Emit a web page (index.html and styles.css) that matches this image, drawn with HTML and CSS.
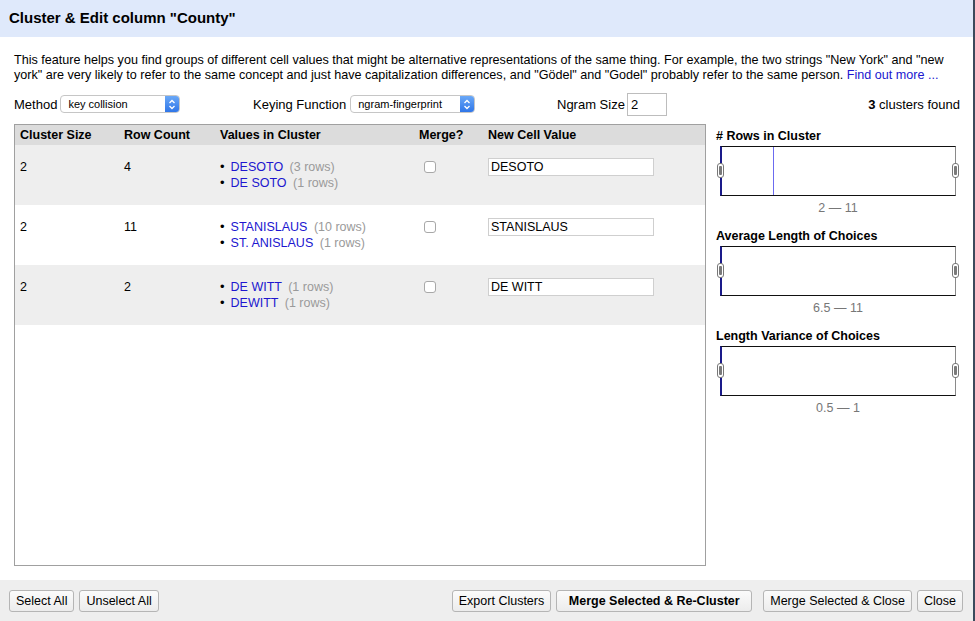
FILE: index.html
```html
<!DOCTYPE html>
<html>
<head>
<meta charset="utf-8">
<link rel="stylesheet" href="styles.css">
</head>
<body>
<div class="dialog">
  <div class="header">Cluster &amp; Edit column "County"</div>
  <div class="content">
    <p class="desc">This feature helps you find groups of different cell values that might be alternative representations of the same thing. For example, the two strings "New York" and "new york" are very likely to refer to the same concept and just have capitalization differences, and "Gödel" and "Godel" probably refer to the same person. <a class="link">Find out more ...</a></p>
    <div class="controls">
      <div class="ctl ctl-method">
        <span>Method</span>
        <div class="select sel-method"><span class="sel-text">key collision</span><span class="stepper"><svg width="8" height="11" viewBox="0 0 8 11"><path d="M1.5 4 L4 1.5 L6.5 4 M1.5 7 L4 9.5 L6.5 7" fill="none" stroke="#fff" stroke-width="1.3"/></svg></span></div>
      </div>
      <div class="ctl ctl-key">
        <span>Keying Function</span>
        <div class="select sel-key"><span class="sel-text">ngram-fingerprint</span><span class="stepper"><svg width="8" height="11" viewBox="0 0 8 11"><path d="M1.5 4 L4 1.5 L6.5 4 M1.5 7 L4 9.5 L6.5 7" fill="none" stroke="#fff" stroke-width="1.3"/></svg></span></div>
      </div>
      <div class="ctl ctl-ngram">
        <span>Ngram Size</span>
        <div class="ngram-input">2</div>
      </div>
      <div class="found"><b>3</b> clusters found</div>
    </div>
    <div class="main">
      <div class="table-box">
        <div class="trow thead">
          <div class="c1">Cluster Size</div>
          <div class="c2">Row Count</div>
          <div class="c3">Values in Cluster</div>
          <div class="c4">Merge?</div>
          <div class="c5">New Cell Value</div>
        </div>
        <div class="trow odd">
          <div class="c1">2</div>
          <div class="c2">4</div>
          <div class="c3"><ul><li><a class="link">DESOTO</a> <span class="cnt">(3 rows)</span></li><li><a class="link">DE SOTO</a> <span class="cnt">(1 rows)</span></li></ul></div>
          <div class="c4"><span class="check"></span></div>
          <div class="c5"><div class="cell-input">DESOTO</div></div>
        </div>
        <div class="trow even">
          <div class="c1">2</div>
          <div class="c2">11</div>
          <div class="c3"><ul><li><a class="link">STANISLAUS</a> <span class="cnt">(10 rows)</span></li><li><a class="link">ST. ANISLAUS</a> <span class="cnt">(1 rows)</span></li></ul></div>
          <div class="c4"><span class="check"></span></div>
          <div class="c5"><div class="cell-input">STANISLAUS</div></div>
        </div>
        <div class="trow odd">
          <div class="c1">2</div>
          <div class="c2">2</div>
          <div class="c3"><ul><li><a class="link">DE WITT</a> <span class="cnt">(1 rows)</span></li><li><a class="link">DEWITT</a> <span class="cnt">(1 rows)</span></li></ul></div>
          <div class="c4"><span class="check"></span></div>
          <div class="c5"><div class="cell-input">DE WITT</div></div>
        </div>
      </div>
      <div class="facets">
        <div class="facet">
          <div class="facet-title"># Rows in Cluster</div>
          <div class="hist">
            <span class="bar" style="left: 51px"></span>
            <span class="handle hl"></span><span class="handle hr"></span>
          </div>
          <div class="range">2 — 11</div>
        </div>
        <div class="facet">
          <div class="facet-title">Average Length of Choices</div>
          <div class="hist">
            <span class="handle hl"></span><span class="handle hr"></span>
          </div>
          <div class="range">6.5 — 11</div>
        </div>
        <div class="facet">
          <div class="facet-title">Length Variance of Choices</div>
          <div class="hist">
            <span class="handle hl"></span><span class="handle hr"></span>
          </div>
          <div class="range">0.5 — 1</div>
        </div>
      </div>
    </div>
  </div>
  <div class="footer">
    <div class="btn-group">
      <button class="btn">Select All</button>
      <button class="btn">Unselect All</button>
    </div>
    <div class="btn-group">
      <button class="btn btn-export">Export Clusters</button>
      <button class="btn btn-primary">Merge Selected &amp; Re-Cluster</button>
      <button class="btn btn-close-merge">Merge Selected &amp; Close</button>
      <button class="btn">Close</button>
    </div>
  </div>
</div>
</body>
</html>
```

FILE: styles.css
```css
* { box-sizing: border-box; }
html, body { margin: 0; padding: 0; background: #fff; }
body {
  font-family: "Liberation Sans", Arial, sans-serif;
  font-size: 13px;
  color: #000;
}
.dialog {
  width: 975px;
  height: 621px;
  display: flex;
  flex-direction: column;
  border-right: 2px solid #3c4a5c;
}
.header {
  height: 37px;
  background: #dfe9fb;
  font-weight: bold;
  font-size: 15px;
  line-height: 36px;
  padding-left: 9px;
}
.content {
  padding: 16px 13px 0 14px;
  display: flex;
  flex-direction: column;
}
.desc {
  margin: 0;
  font-size: 12.6px;
  line-height: 15px;
  height: 30px;
  padding-right: 10px;
}
.link { color: #2016cf; }
.controls {
  display: flex;
  align-items: center;
  height: 24px;
  margin-top: 9px;
  font-size: 13px;
}
.ctl { display: flex; align-items: center; }
.ctl-method { width: 239px; }
.ctl-key { width: 304px; }
.ctl-ngram { flex: 1; }
.select {
  position: relative;
  display: flex;
  align-items: center;
  height: 18px;
  border: 1px solid #c6c6c6;
  border-radius: 4px;
  background: #fff;
  font-size: 11px;
  overflow: hidden;
  margin-left: 3px;
}
.sel-text { flex: 1; padding-left: 7px; }
.sel-method { width: 120px; }
.sel-key { width: 125px; margin-left: 4px; }
.stepper {
  width: 14px;
  height: 100%;
  background: linear-gradient(#6aa8f7, #2f76e8);
  display: flex;
  align-items: center;
  justify-content: center;
}
.ngram-input {
  width: 40px;
  height: 23px;
  border: 1px solid #bdbdbd;
  margin-left: 2px;
  padding-left: 3px;
  line-height: 21px;
  font-size: 13px;
}
.found { padding-right: 0; }
.main {
  display: flex;
  margin-top: 8px;
  height: 442px;
}
.table-box {
  width: 693px;
  border: 1px solid #a0a0a0;
  display: flex;
  flex-direction: column;
}
.trow {
  display: flex;
  font-size: 12.5px;
}
.thead {
  height: 20px;
  background: #dcdcdc;
  font-weight: bold;
  align-items: center;
}
.odd, .even { height: 60px; padding-top: 14px; }
.odd { background: #eeeeee; }
.even { background: #fff; }
.c1 { width: 104px; padding-left: 5px; }
.c2 { width: 96px; padding-left: 5px; }
.c3 { width: 199px; padding-left: 5px; }
.c4 { width: 69px; padding-left: 5px; }
.c5 { flex: 1; padding-left: 5px; }
.odd .c1, .even .c1, .odd .c2, .even .c2 { padding-top: 1px; }
ul { margin: 0; padding: 0; list-style: none; }
li { line-height: 15px; }
li::before { content: "•"; margin-right: 6px; font-size: 13px; }
.cnt { color: #9a9a9a; margin-left: 3px; }
.c4 { display: flex; }
.check {
  display: block;
  width: 12px;
  height: 12px;
  border: 1px solid #a8a8a8;
  border-radius: 3px;
  background: #fff;
  margin-left: 5px;
  margin-top: 2px;
}
.cell-input {
  width: 166px;
  height: 18px;
  border: 1px solid #cfcfcf;
  background: #fff;
  font-size: 12.5px;
  line-height: 16px;
  padding-left: 2px;
  margin-top: -1px;
}
.facets {
  flex: 1;
  padding-left: 10px;
  padding-top: 5px;
}
.facet { margin-bottom: 14px; }
.facet-title {
  font-weight: bold;
  font-size: 12.5px;
  line-height: 15px;
  margin-bottom: 2px;
}
.hist {
  position: relative;
  width: 236px;
  height: 50px;
  margin-left: 4px;
  border-top: 1px solid #111;
  border-bottom: 1px solid #111;
  border-left: 2px solid #1a1a8a;
  border-right: 1px solid #8a8a8a;
}
.bar {
  position: absolute;
  top: 0;
  bottom: 0;
  width: 1px;
  background: #6b6bf0;
}
.handle {
  position: absolute;
  top: 16px;
  width: 7px;
  height: 15px;
  border: 1px solid #777;
  border-radius: 3px;
  background: #fff;
}
.handle::after {
  content: "";
  position: absolute;
  left: 1px; right: 1px; top: 2px; bottom: 2px;
  background: #7a7a7a;
  border-radius: 1px;
}
.hl { left: -5px; }
.hr { right: -4px; }
.range {
  text-align: center;
  color: #777;
  font-size: 12.5px;
  margin-top: 5px;
  width: 244px;
}
.footer {
  height: 41px;
  margin-top: 14px;
  background: #eeeeee;
  display: flex;
  justify-content: space-between;
  align-items: center;
  padding: 0 10px 0 9px;
}
.btn-group { display: flex; gap: 5px; }
.btn {
  font-family: "Liberation Sans", Arial, sans-serif;
  font-size: 12.5px;
  height: 22px;
  padding: 0 6px;
  border: 1px solid #b5b5b5;
  border-radius: 3px;
  background: linear-gradient(#fbfbfb, #ececec);
  color: #000;
  margin: 0;
}
.btn-primary { font-weight: bold; width: 196px; }
.btn-close-merge { margin-left: 6px; }
```
